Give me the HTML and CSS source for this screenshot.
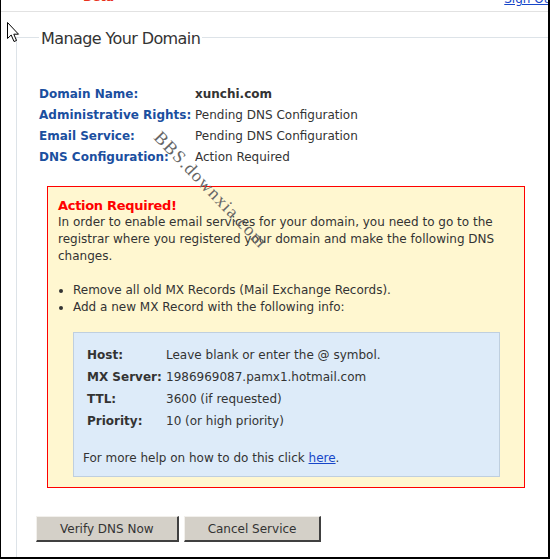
FILE: index.html
```html
<!DOCTYPE html>
<html lang="en">
<head>
    <meta charset="UTF-8">
    <title>Manage Your Domain</title>
    <link rel="stylesheet" href="styles.css">
</head>
<body>
    <div class="frame">
        <div class="topbar">
            <span class="beta">Beta</span>
            <a class="signout" href="#">Sign Out</a>
        </div>

        <fieldset class="manage">
            <legend>Manage Your Domain</legend>

            <dl class="summary">
                <dt>Domain Name:</dt>
                <dd class="domain">xunchi.com</dd>
                <dt>Administrative Rights:</dt>
                <dd>Pending DNS Configuration</dd>
                <dt>Email Service:</dt>
                <dd>Pending DNS Configuration</dd>
                <dt>DNS Configuration:</dt>
                <dd>Action Required</dd>
            </dl>

            <div class="alert">
                <h3>Action Required!</h3>
                <p>In order to enable email services for your domain, you need to go to the registrar where you registered your domain and make the following DNS changes.</p>
                <ul>
                    <li>Remove all old MX Records (Mail Exchange Records).</li>
                    <li>Add a new MX Record with the following info:</li>
                </ul>

                <div class="mx-info">
                    <table>
                        <tr><th>Host:</th><td>Leave blank or enter the @ symbol.</td></tr>
                        <tr><th>MX Server:</th><td>1986969087.pamx1.hotmail.com</td></tr>
                        <tr><th>TTL:</th><td>3600 (if requested)</td></tr>
                        <tr><th>Priority:</th><td>10 (or high priority)</td></tr>
                    </table>
                    <p class="help">For more help on how to do this click <a href="#">here</a>.</p>
                </div>
            </div>

            <div class="actions">
                <button>Verify DNS Now</button>
                <button>Cancel Service</button>
            </div>
        </fieldset>

        <!-- overlays from the original capture -->
        <div class="watermark">BBS.downxia.com</div>
        <svg class="cursor" width="13" height="22" viewBox="0 0 13 22">
            <path d="M0.5 0.5 L0.5 16.5 L4.2 13 L7 19.5 L9.5 18.5 L6.8 12.2 L11.5 12.2 Z" fill="#fff" stroke="#000" stroke-width="1"/>
        </svg>
    </div>
</body>
</html>
```

FILE: styles.css
```css
body {
    margin: 0;
    font-family: "DejaVu Sans", Verdana, sans-serif;
    font-size: 12px;
    color: #333;
}
.frame {
    position: relative;
    height: 559px;
    box-sizing: border-box;
    border-left: 1px solid #000;
    border-right: 2px solid #000;
    border-bottom: 2px solid #000;
    overflow: hidden;
    background: #fff;
}
.topbar {
    display: flex;
    justify-content: space-between;
    height: 11px;
    border-bottom: 1px solid #e2e2e2;
    overflow: hidden;
    line-height: 14px;
}
.beta {
    margin: -10px 0 0 82px;
    color: #e8321e;
    font-weight: bold;
    font-size: 12px;
}
.signout {
    margin: -8px -8px 0 0;
    color: #1646c8;
    font-size: 12px;
}
.manage {
    margin: 14px -40px 0 15px;
    padding: 35px 0 30px 0;
    border: 1px solid #dde3e8;
    min-width: 0;
}
.manage legend {
    margin-left: 22px;
    padding: 3px 2px 0;
    font-size: 16px;
    letter-spacing: -0.6px;
    line-height: 20px;
    color: #333;
}
.summary {
    display: grid;
    grid-template-columns: 156px auto;
    margin: 0 0 0 22px;
    line-height: 21px;
}
.summary dt {
    font-weight: bold;
    color: #1b4f9f;
}
.summary dd {
    margin: 0;
    color: #333;
}
.summary .domain {
    font-weight: bold;
}
.alert {
    width: 478px;
    box-sizing: border-box;
    margin: 18px 0 0 30px;
    padding: 10px 10px 10px 10px;
    border: 1px solid #f00;
    background: #fff7d0;
    line-height: 17px;
}
.alert h3 {
    margin: 0;
    font-size: 13px;
    letter-spacing: -0.3px;
    color: #f00;
}
.alert p {
    margin: 0 0 17px;
}
.alert ul {
    margin: 0;
    padding-left: 15px;
}
.mx-info {
    margin: 16px 14px 0 15px;
    padding: 11px 9px 9px;
    border: 1px solid #bfcfdf;
    background: #ddebf9;
}
.mx-info table {
    margin-left: 4px;
    border-collapse: collapse;
}
.mx-info th {
    width: 79px;
    padding: 0;
    text-align: left;
    color: #333;
}
.mx-info td {
    padding: 0;
}
.mx-info tr {
    height: 22px;
}
.mx-info .help {
    margin: 18px 0 0;
}
.mx-info a {
    color: #1646c8;
}
.actions {
    display: flex;
    gap: 5px;
    margin: 28px 0 0 19px;
}
.actions button {
    height: 26px;
    padding: 0 23px;
    font-family: "DejaVu Sans", Verdana, sans-serif;
    font-size: 12px;
    color: #333;
    background: #d4d0c8;
    border-style: solid;
    border-width: 1px 2px 2px 1px;
    border-color: #f2f0ec #404040 #404040 #f2f0ec;
    cursor: pointer;
}
.watermark {
    position: absolute;
    left: 156px;
    top: 124px;
    transform-origin: 0 50%;
    transform: rotate(46deg);
    font-family: "Liberation Serif", serif;
    font-size: 18px;
    letter-spacing: 1.2px;
    color: #666;
    white-space: nowrap;
}
.cursor {
    position: absolute;
    left: 6px;
    top: 22px;
}
```
